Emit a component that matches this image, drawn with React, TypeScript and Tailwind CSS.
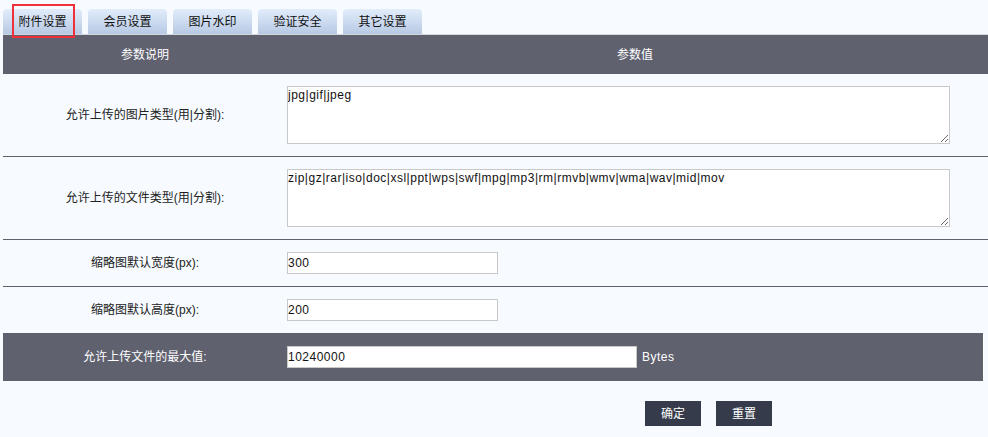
import React from 'react';

const font = { fontFamily: '"Liberation Sans", "Noto Sans CJK SC", sans-serif' };

const tabs = ['附件设置', '会员设置', '图片水印', '验证安全', '其它设置'];

function Label({ children, dark }: { children: React.ReactNode; dark?: boolean }) {
  return (
    <div className={`w-[284px] shrink-0 text-center text-[12px] ${dark ? 'text-white' : 'text-[#222]'}`}>
      {children}
    </div>
  );
}

export default function App() {
  return (
    <div className="w-[988px] h-[437px] bg-[#f7fbff] overflow-hidden relative" style={font}>
      {/* Tabs */}
      <div className="flex gap-[6px] pl-[3px] pt-[9px] h-[34px]">
        {tabs.map(t => (
          <div
            key={t}
            className="w-[79px] h-[25px] rounded-t-[4px] bg-gradient-to-b from-[#e2edfb] to-[#b7c9e3] flex items-center justify-center text-[12px] text-[#111]"
          >
            {t}
          </div>
        ))}
      </div>
      {/* highlight box */}
      <div className="absolute left-[12px] top-[4px] w-[63px] h-[34px] border-2 border-[#f0303a]" />

      <div className="ml-[3px]">
        {/* Header */}
        <div className="flex items-center h-[40px] bg-[#5f616f] border-t border-[#d4d8de] text-white text-[12px]">
          <div className="w-[284px] text-center">参数说明</div>
          <div className="w-[696px] text-center">参数值</div>
        </div>

        {/* Row 1 */}
        <div className="flex items-center h-[83px] border-b border-[#5f616f]">
          <Label>允许上传的图片类型(用|分割):</Label>
          <textarea
            defaultValue="jpg|gif|jpeg"
            className="w-[663px] h-[58px] bg-white border border-[#c8c8c8] text-[12px] tracking-[0.5px] text-[#111] p-0 leading-[16px] outline-none"
            style={font}
          />
        </div>

        {/* Row 2 */}
        <div className="flex items-center h-[83px] border-b border-[#5f616f]">
          <Label>允许上传的文件类型(用|分割):</Label>
          <textarea
            defaultValue="zip|gz|rar|iso|doc|xsl|ppt|wps|swf|mpg|mp3|rm|rmvb|wmv|wma|wav|mid|mov"
            className="w-[663px] h-[58px] bg-white border border-[#c8c8c8] text-[12px] tracking-[0.5px] text-[#111] p-0 leading-[16px] outline-none"
            style={font}
          />
        </div>

        {/* Row 3 */}
        <div className="flex items-center h-[47px] border-b border-[#5f616f]">
          <Label>缩略图默认宽度(px):</Label>
          <input
            defaultValue="300"
            className="w-[211px] h-[22px] bg-white border border-[#c8c8c8] text-[12px] tracking-[0.5px] text-[#111] px-0 outline-none"
            style={font}
          />
        </div>

        {/* Row 4 */}
        <div className="flex items-center h-[46px]">
          <Label>缩略图默认高度(px):</Label>
          <input
            defaultValue="200"
            className="w-[211px] h-[22px] bg-white border border-[#c8c8c8] text-[12px] tracking-[0.5px] text-[#111] px-0 outline-none"
            style={font}
          />
        </div>

        {/* Row 5 */}
        <div className="flex items-center h-[48px] w-[981px] bg-[#5f616f] border-r border-white">
          <Label dark>允许上传文件的最大值:</Label>
          <input
            defaultValue="10240000"
            className="w-[350px] h-[22px] bg-white border border-[#c8c8c8] text-[12px] tracking-[0.5px] text-[#111] px-0 outline-none"
            style={font}
          />
          <span className="ml-[5px] text-[12px] tracking-[0.5px] text-white">Bytes</span>
        </div>

        {/* Buttons */}
        <div className="flex gap-[15px] pl-[642px] pt-[20px]">
          <button className="w-[56px] h-[25px] bg-[#363b4b] text-white text-[12px]">确定</button>
          <button className="w-[56px] h-[25px] bg-[#363b4b] text-white text-[12px]">重置</button>
        </div>
      </div>
    </div>
  );
}
